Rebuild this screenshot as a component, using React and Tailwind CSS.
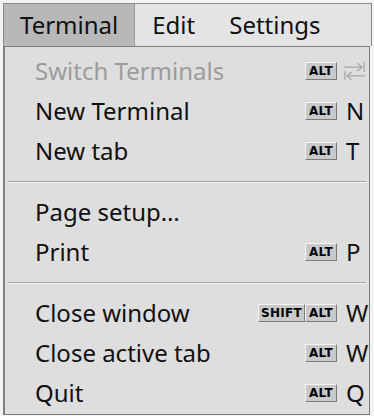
import React from "react";

const font = { fontFamily: '"Noto Sans", "Open Sans", sans-serif' };

const Key = ({ children, wide }) => (
  <span
    className={`inline-flex items-center justify-center h-[18px] ${
      wide ? "w-[47px]" : "w-[32px]"
    } bg-[#c9c9c9] border border-t-[#f4f4f4] border-l-[#f4f4f4] border-r-[#7c7c7c] border-b-[#7c7c7c] text-[12px] font-black leading-none tracking-[0.3px] text-black`}
    style={{ fontFamily: '"DejaVu Sans", sans-serif' }}
  >
    {children}
  </span>
);

const SwitchIcon = () => (
  <svg width="26" height="22" viewBox="0 0 26 22" fill="none" stroke="#a8a8a8" strokeWidth="1.3">
    <line x1="2" y1="7" x2="21" y2="7" />
    <polyline points="16,3 21,7 16,11" />
    <line x1="23" y1="2" x2="23" y2="12" />
    <line x1="5" y1="16" x2="24" y2="16" />
    <polyline points="10,12 5,16 10,20" />
    <line x1="3" y1="11" x2="3" y2="21" />
  </svg>
);

const Item = ({ label, keys = [], accel }) => (
  <div className="flex items-center h-[40px] pl-[30px] pr-[2px]">
    <span className="flex-1 text-[24px] leading-none text-[#111]">{label}</span>
    <div className="flex items-center">
      {keys.map((k) => (
        <Key key={k} wide={k === "SHIFT"}>
          {k}
        </Key>
      ))}
      <span className="w-[30px] pl-[9px] text-[24px] leading-none text-[#111]">{accel}</span>
    </div>
  </div>
);

const Sep = () => (
  <div className="h-[21px] flex items-center px-[3px]">
    <div className="w-full h-[2px] border-t border-[#a3a3a3] border-b border-b-[#f5f5f5]" />
  </div>
);

export default function App() {
  return (
    <div className="w-[374px] h-[416px] bg-[#f3f3f3] pt-[3px] pl-[3px] overflow-hidden" style={font}>
      <div className="flex h-[43px] w-[369px] bg-[#e4e4e4] border-t border-l border-r border-[#8c8c8c] text-[24px] text-[#111]">
        <div className="flex items-center px-[16px] bg-[#b8b8b8] border-r border-[#9a9a9a]">Terminal</div>
        <div className="flex items-center px-[17px]">Edit</div>
        <div className="flex items-center px-[17px]">Settings</div>
      </div>
      <div className="w-[367px] h-[369px] bg-[#dedede] border-l-2 border-t border-r border-b border-[#7d7d7d] pt-[4px]">
        <div className="flex items-center h-[40px] pl-[30px] pr-[2px]">
          <span className="flex-1 text-[24px] leading-none text-[#9c9c9c]">Switch Terminals</span>
          <Key>ALT</Key>
          <span className="w-[30px] pl-[5px] flex">
            <SwitchIcon />
          </span>
        </div>
        <Item label="New Terminal" keys={["ALT"]} accel="N" />
        <Item label="New tab" keys={["ALT"]} accel="T" />
        <Sep />
        <Item label="Page setup…" />
        <Item label="Print" keys={["ALT"]} accel="P" />
        <Sep />
        <Item label="Close window" keys={["SHIFT", "ALT"]} accel="W" />
        <Item label="Close active tab" keys={["ALT"]} accel="W" />
        <Item label="Quit" keys={["ALT"]} accel="Q" />
      </div>
    </div>
  );
}
